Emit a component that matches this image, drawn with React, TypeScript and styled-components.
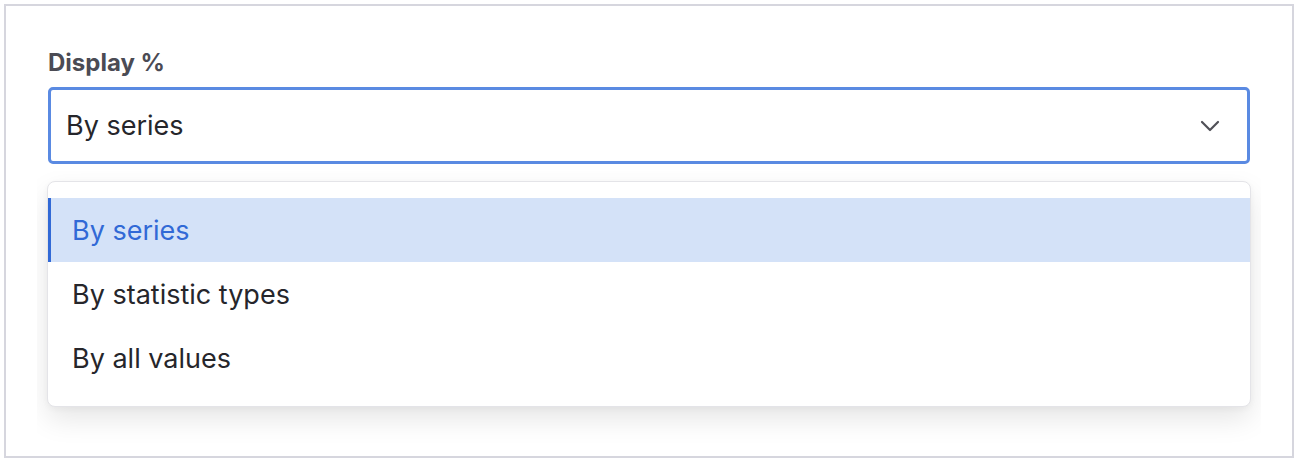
import React, {FC, useState} from 'react';
import styled, {createGlobalStyle} from 'styled-components';

const GlobalStyle = createGlobalStyle`
    html, body {
        margin: 0;
        padding: 0;
        background: #ffffff;
        font-family: Inter, "Noto Sans", "Liberation Sans", sans-serif;
    }
`;

const Frame = styled.div`
    margin: 4px;
    height: 454px;
    border: 2px solid #d6d6de;
    box-sizing: border-box;
    padding: 43px 42px 0 42px;
    display: flex;
    flex-direction: column;
`;

const Label = styled.div`
    font-size: 24px;
    line-height: 28px;
    font-weight: 700;
    color: #4b4b54;
    margin-bottom: 10px;
`;

const SelectBox = styled.div`
    height: 77px;
    box-sizing: border-box;
    border: 3px solid #5a8ae2;
    border-radius: 5px;
    display: flex;
    align-items: center;
    justify-content: space-between;
    padding: 0 27px 0 15px;
    font-size: 27px;
    color: #26262b;
`;

const Clip = styled.div`
    margin: 7px -11px 0 -11px;
    padding: 10px 10px 42px 10px;
    overflow: hidden;
`;

const Menu = styled.div`
    border: 1px solid #e4e4e8;
    border-radius: 8px;
    background: #ffffff;
    padding: 16px 0;
    box-shadow: 0 12px 28px rgba(0, 0, 0, 0.1), 0 2px 6px rgba(0, 0, 0, 0.04);
`;

const Option = styled.div<{ active: boolean }>`
    height: 64px;
    display: flex;
    align-items: center;
    box-sizing: border-box;
    padding-left: ${({active}) => (active ? '21px' : '24px')};
    border-left: ${({active}) => (active ? '3px solid #3169d6' : 'none')};
    background: ${({active}) => (active ? '#d4e2f8' : 'transparent')};
    color: ${({active}) => (active ? '#3169d6' : '#26262b')};
    font-size: 27px;
`;

const options = ['By series', 'By statistic types', 'By all values'];

const App: FC = () => {
    const [value, setValue] = useState(options[0]);

    return (
        <>
            <GlobalStyle/>
            <Frame>
                <Label>Display %</Label>
                <SelectBox>
                    <span>{value}</span>
                    <svg width="20" height="12" viewBox="0 0 20 12" fill="none">
                        <path d="M2 2 L10 10 L18 2" stroke="#505057" strokeWidth="2.2" strokeLinecap="round" strokeLinejoin="round"/>
                    </svg>
                </SelectBox>
                <Clip>
                    <Menu>
                        {options.map((o) => (
                            <Option key={o} active={o === value} onClick={() => setValue(o)}>
                                {o}
                            </Option>
                        ))}
                    </Menu>
                </Clip>
            </Frame>
        </>
    );
};

export default App;
